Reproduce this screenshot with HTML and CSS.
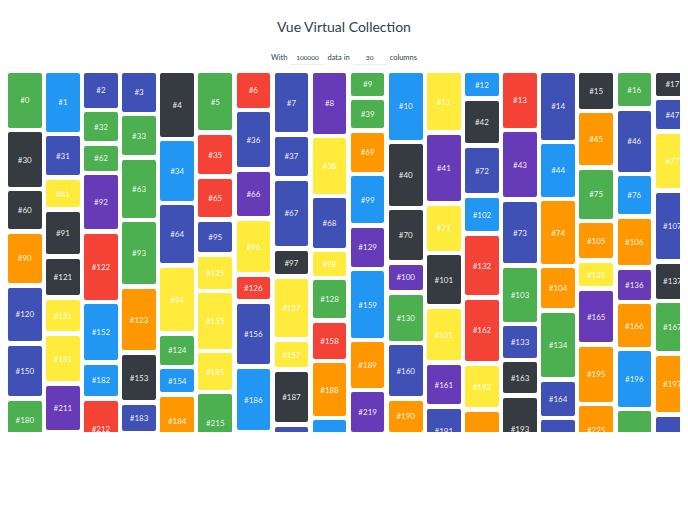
FILE: index.html
```html
<!DOCTYPE html>
<html>
<head>
<meta charset="utf-8">
<title>Vue Virtual Collection</title>
<link rel="stylesheet" href="styles.css">
</head>
<body>
<div class="app">
  <h1 class="title">Vue Virtual Collection</h1>
  <div class="controls">
    <span>With</span>
    <input class="num" type="text" value="100000">
    <span>data in</span>
    <input class="num" type="text" value="30">
    <span>columns</span>
  </div>
  <div class="grid">
    <div class="col">
      <div class="card green" style="height:54.8px">#0</div>
      <div class="card dark" style="height:54.5px">#30</div>
      <div class="card dark" style="height:37.8px">#60</div>
      <div class="card orange" style="height:49.5px">#90</div>
      <div class="card indigo" style="height:53.8px">#120</div>
      <div class="card indigo" style="height:50.5px">#150</div>
      <div class="card green" style="height:37.3px">#180</div>
    </div>
    <div class="col">
      <div class="card blue" style="height:58.8px">#1</div>
      <div class="card indigo" style="height:39.2px">#31</div>
      <div class="card yellow" style="height:27.5px">#61</div>
      <div class="card dark" style="height:42.5px">#91</div>
      <div class="card dark" style="height:36.2px">#121</div>
      <div class="card yellow" style="height:31.8px">#151</div>
      <div class="card yellow" style="height:45.2px">#181</div>
      <div class="card purple" style="height:44.7px">#211</div>
    </div>
    <div class="col">
      <div class="card indigo" style="height:34.8px">#2</div>
      <div class="card green" style="height:28.8px">#32</div>
      <div class="card green" style="height:25.2px">#62</div>
      <div class="card purple" style="height:53.8px">#92</div>
      <div class="card red" style="height:66.2px">#122</div>
      <div class="card blue" style="height:55.8px">#152</div>
      <div class="card blue" style="height:31.8px">#182</div>
      <div class="card red" style="height:55.4px">#212</div>
    </div>
    <div class="col">
      <div class="card indigo" style="height:38.8px">#3</div>
      <div class="card green" style="height:39.2px">#33</div>
      <div class="card green" style="height:57.8px">#63</div>
      <div class="card green" style="height:62.2px">#93</div>
      <div class="card orange" style="height:61.5px">#123</div>
      <div class="card dark" style="height:45.2px">#153</div>
      <div class="card indigo" style="height:26.7px">#183</div>
    </div>
    <div class="col">
      <div class="card dark" style="height:63.8px">#4</div>
      <div class="card blue" style="height:59.5px">#34</div>
      <div class="card indigo" style="height:58.2px">#64</div>
      <div class="card yellow" style="height:63.5px">#94</div>
      <div class="card green" style="height:28.8px">#124</div>
      <div class="card blue" style="height:23.2px">#154</div>
      <div class="card orange" style="height:48.7px">#184</div>
    </div>
    <div class="col">
      <div class="card green" style="height:57.2px">#5</div>
      <div class="card red" style="height:39.8px">#35</div>
      <div class="card red" style="height:38.2px">#65</div>
      <div class="card indigo" style="height:30.5px">#95</div>
      <div class="card yellow" style="height:32.2px">#125</div>
      <div class="card yellow" style="height:55.5px">#155</div>
      <div class="card yellow" style="height:36.5px">#185</div>
      <div class="card green" style="height:57.3px">#215</div>
    </div>
    <div class="col">
      <div class="card red" style="height:34.8px">#6</div>
      <div class="card indigo" style="height:55.2px">#36</div>
      <div class="card purple" style="height:44.2px">#66</div>
      <div class="card yellow" style="height:51.8px">#96</div>
      <div class="card red" style="height:22.5px">#126</div>
      <div class="card indigo" style="height:60.5px">#156</div>
      <div class="card blue" style="height:61.3px">#186</div>
    </div>
    <div class="col">
      <div class="card indigo" style="height:59.2px">#7</div>
      <div class="card indigo" style="height:39.5px">#37</div>
      <div class="card indigo" style="height:65.5px">#67</div>
      <div class="card dark" style="height:23.8px">#97</div>
      <div class="card yellow" style="height:58.5px">#127</div>
      <div class="card yellow" style="height:25.2px">#157</div>
      <div class="card dark" style="height:50.8px">#187</div>
      <div class="card indigo" style="height:50px">#217</div>
    </div>
    <div class="col">
      <div class="card purple" style="height:60.5px">#8</div>
      <div class="card yellow" style="height:55.8px">#38</div>
      <div class="card indigo" style="height:49.5px">#68</div>
      <div class="card yellow" style="height:23.5px">#98</div>
      <div class="card green" style="height:38.2px">#128</div>
      <div class="card red" style="height:35.8px">#158</div>
      <div class="card orange" style="height:52.5px">#188</div>
      <div class="card blue" style="height:40px">#218</div>
    </div>
    <div class="col">
      <div class="card green" style="height:22.8px">#9</div>
      <div class="card green" style="height:27.8px">#39</div>
      <div class="card orange" style="height:39.2px">#69</div>
      <div class="card blue" style="height:47.2px">#99</div>
      <div class="card purple" style="height:38.8px">#129</div>
      <div class="card blue" style="height:66.5px">#159</div>
      <div class="card orange" style="height:45.5px">#189</div>
      <div class="card purple" style="height:40px">#219</div>
    </div>
    <div class="col">
      <div class="card blue" style="height:66.5px">#10</div>
      <div class="card dark" style="height:61.8px">#40</div>
      <div class="card dark" style="height:49.8px">#70</div>
      <div class="card purple" style="height:25.5px">#100</div>
      <div class="card green" style="height:46.2px">#130</div>
      <div class="card indigo" style="height:50.8px">#160</div>
      <div class="card orange" style="height:31.3px">#190</div>
    </div>
    <div class="col">
      <div class="card yellow" style="height:57.2px">#11</div>
      <div class="card purple" style="height:66.5px">#41</div>
      <div class="card yellow" style="height:45.2px">#71</div>
      <div class="card dark" style="height:48.8px">#101</div>
      <div class="card yellow" style="height:51.8px">#131</div>
      <div class="card purple" style="height:39.2px">#161</div>
      <div class="card indigo" style="height:44px">#191</div>
    </div>
    <div class="col">
      <div class="card blue" style="height:23.2px">#12</div>
      <div class="card dark" style="height:42.8px">#42</div>
      <div class="card indigo" style="height:45.5px">#72</div>
      <div class="card blue" style="height:33.5px">#102</div>
      <div class="card red" style="height:59.2px">#132</div>
      <div class="card red" style="height:61.5px">#162</div>
      <div class="card yellow" style="height:41.8px">#192</div>
      <div class="card orange" style="height:50px">#222</div>
    </div>
    <div class="col">
      <div class="card red" style="height:54.8px">#13</div>
      <div class="card purple" style="height:65.2px">#43</div>
      <div class="card indigo" style="height:61.5px">#73</div>
      <div class="card green" style="height:53.8px">#103</div>
      <div class="card indigo" style="height:31.5px">#133</div>
      <div class="card dark" style="height:31.2px">#163</div>
      <div class="card dark" style="height:63px">#193</div>
    </div>
    <div class="col">
      <div class="card indigo" style="height:66.5px">#14</div>
      <div class="card blue" style="height:52.8px">#44</div>
      <div class="card orange" style="height:62.5px">#74</div>
      <div class="card orange" style="height:39.8px">#104</div>
      <div class="card green" style="height:64.8px">#134</div>
      <div class="card indigo" style="height:33.8px">#164</div>
      <div class="card indigo" style="height:50px">#194</div>
    </div>
    <div class="col">
      <div class="card dark" style="height:35.8px">#15</div>
      <div class="card orange" style="height:52.2px">#45</div>
      <div class="card green" style="height:48.8px">#75</div>
      <div class="card orange" style="height:35.2px">#105</div>
      <div class="card yellow" style="height:23.5px">#135</div>
      <div class="card purple" style="height:51.2px">#165</div>
      <div class="card orange" style="height:55.2px">#195</div>
      <div class="card orange" style="height:47px">#225</div>
    </div>
    <div class="col">
      <div class="card green" style="height:33.2px">#16</div>
      <div class="card indigo" style="height:61.2px">#46</div>
      <div class="card blue" style="height:37.8px">#76</div>
      <div class="card orange" style="height:46.5px">#106</div>
      <div class="card purple" style="height:30.2px">#136</div>
      <div class="card orange" style="height:42.5px">#166</div>
      <div class="card blue" style="height:55.5px">#196</div>
      <div class="card green" style="height:50px">#226</div>
    </div>
    <div class="col">
      <div class="card dark" style="height:22.8px">#17</div>
      <div class="card indigo" style="height:28.8px">#47</div>
      <div class="card yellow" style="height:54.5px">#77</div>
      <div class="card indigo" style="height:66.5px">#107</div>
      <div class="card dark" style="height:35.2px">#137</div>
      <div class="card green" style="height:47.8px">#167</div>
      <div class="card orange" style="height:56.8px">#197</div>
      <div class="card indigo" style="height:50px">#227</div>
    </div>
  </div>
</div>
</body>
</html>
```
FILE: styles.css
```css
html, body {
  margin: 0;
  padding: 0;
  background: #ffffff;
}

body {
  font-family: Lato, "Noto Sans", sans-serif;
  color: #2c3e50;
}

.app {
  padding: 0 8px;
}

.title {
  margin: 0;
  padding-top: 18px;
  font-size: 14px;
  line-height: 18px;
  font-weight: 400;
  text-align: center;
}

.controls {
  margin-top: 15px;
  height: 14px;
  display: flex;
  justify-content: center;
  align-items: center;
  gap: 3px;
  font-size: 7.5px;
  line-height: 14px;
}

.num {
  width: 34px;
  height: 12px;
  padding: 0;
  border: none;
  border-bottom: 1px solid #ececec;
  font-family: Lato, "Noto Sans", sans-serif;
  font-size: 6.5px;
  color: #2c3e50;
  text-align: center;
  background: transparent;
  outline: none;
}

.grid {
  margin-top: 8px;
  height: 358.5px;
  display: flex;
  gap: 4.5px;
  overflow: hidden;
}

.col {
  flex: 0 0 33.6px;
  display: flex;
  flex-direction: column;
  gap: 4.5px;
}

.card {
  flex-shrink: 0;
  border-radius: 2px;
  display: flex;
  align-items: center;
  justify-content: center;
  color: rgba(255, 255, 255, 0.92);
  font-size: 8px;
  white-space: nowrap;
}

.green { background: #4caf50; }
.blue { background: #2196f3; }
.indigo { background: #3f51b5; }
.dark { background: #353b41; }
.red { background: #f44336; }
.purple { background: #673ab7; }
.yellow { background: #ffeb3b; }
.orange { background: #ff9800; }
```
